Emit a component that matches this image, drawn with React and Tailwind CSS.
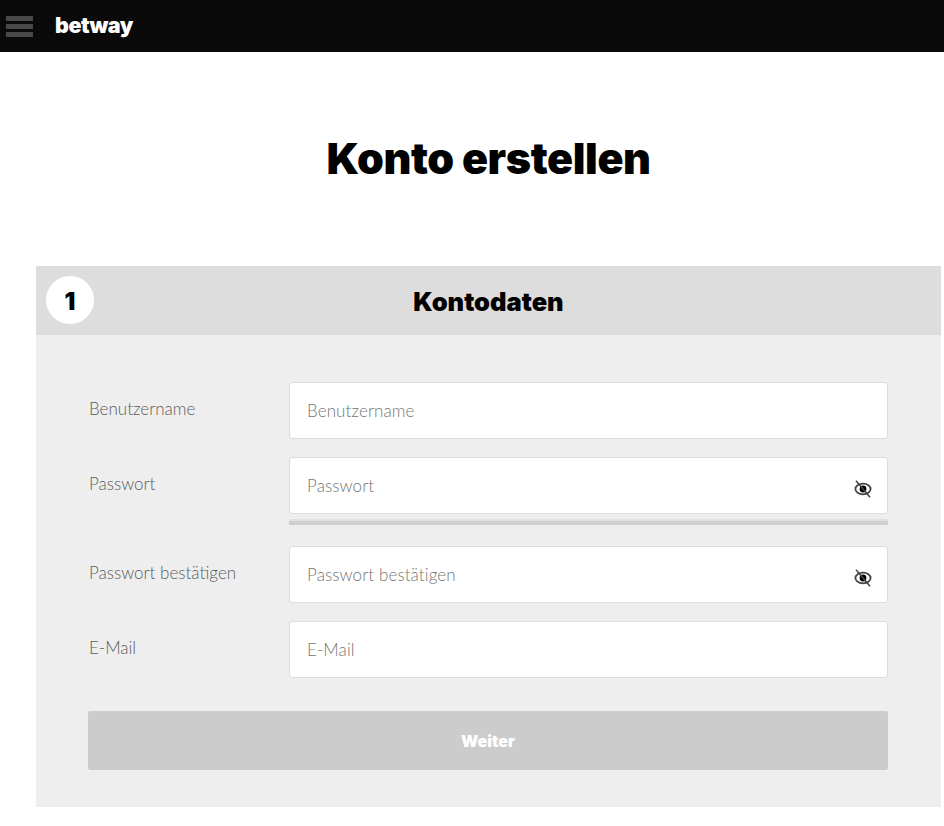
import React from "react";

function EyeOff() {
  return (
    <svg width="20" height="20" viewBox="0 0 20 20" className="shrink-0 mt-[6px]">
      <ellipse cx="10" cy="10" rx="7.6" ry="5.4" fill="none" stroke="#444" strokeWidth="1.8" />
      <circle cx="10" cy="10" r="3.4" fill="#000" />
      <path d="M3 1.8 L17 18.2" stroke="#444" strokeWidth="1.5" />
    </svg>
  );
}

function Field({ label, eye, children }) {
  return (
    <div className="flex">
      <label className="w-[201px] pt-[15px] pl-px text-[17px] leading-6 font-light text-[#5c5c5c]">{label}</label>
      <div className="w-[599px]">
        <div className="h-[57px] flex items-center pl-[17px] pr-[14px] bg-white border border-[#dcdcdc] rounded-[3px]">
          <input
            placeholder={label}
            className="flex-1 min-w-0 text-[17px] tracking-[0.1px] font-light text-[#333] outline-none placeholder:text-[#757575]"
          />
          {eye && <EyeOff />}
        </div>
        {children}
      </div>
    </div>
  );
}

export default function App() {
  return (
    <div className="min-h-[826px] bg-white font-['Lato',sans-serif]">
      <header className="h-[52px] bg-[#0a0a0a] flex items-center">
        <div className="ml-[6px] w-[27px] flex flex-col gap-[3px]">
          <span className="h-[5px] bg-[#484848]" />
          <span className="h-[5px] bg-[#484848]" />
          <span className="h-[5px] bg-[#484848]" />
        </div>
        <span className="ml-[22px] font-['Inter',sans-serif] font-black text-[21.5px] leading-none tracking-[-0.5px] text-white">betway</span>
      </header>

      <div className="ml-[36px] w-[905px]">
        <h1 className="pt-[79px] pb-[81px] text-center font-['Inter',sans-serif] font-black text-[43px] leading-[54px] tracking-[-0.4px] text-black">Konto erstellen</h1>

        <section className="bg-[#eeeeee]">
          <div className="h-[69px] bg-[#dddddd] flex items-center relative">
            <div className="absolute left-[10px] top-[10px] w-[48px] h-[48px] rounded-full bg-white flex items-center justify-center pt-1 font-['Inter',sans-serif] font-black text-2xl text-black">1</div>
            <h2 className="w-full text-center pt-[3px] font-['Inter',sans-serif] font-black text-[25.5px] text-black">Kontodaten</h2>
          </div>

          <form className="pt-[47px] pb-[37px] pl-[52px] pr-[53px] flex flex-col">
            <Field label="Benutzername" />
            <div className="mt-[18px]">
              <Field label="Passwort" eye>
                <div className="mt-[5px] h-[6px] bg-[#cfcfcf] border-t-2 border-[#e0e0e0]" />
              </Field>
            </div>
            <div className="mt-[21px]">
              <Field label="Passwort bestätigen" eye />
            </div>
            <div className="mt-[18px]">
              <Field label="E-Mail" />
            </div>
            <button type="button" className="mt-[33px] h-[59px] w-[800px] rounded-[2px] bg-[#cccccc] text-white font-['Inter',sans-serif] font-black text-base">Weiter</button>
          </form>
        </section>
      </div>
    </div>
  );
}
